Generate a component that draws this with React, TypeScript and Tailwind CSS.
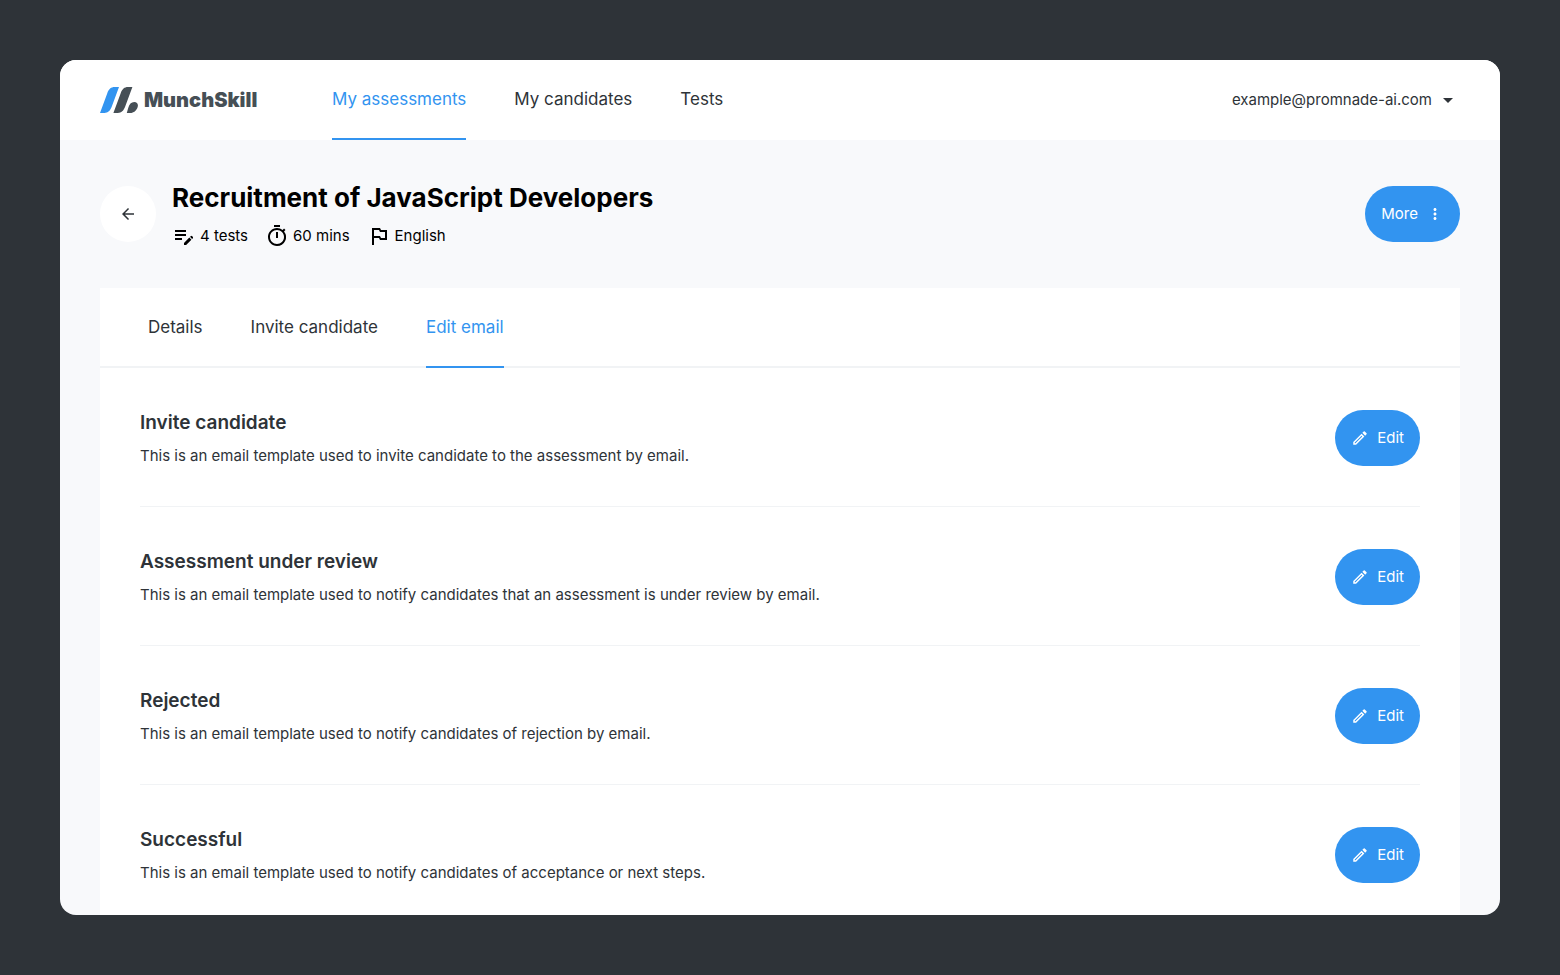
import React from "react";
import {
  MdArrowBack,
  MdArrowDropDown,
  MdMoreVert,
  MdOutlineEditNote,
  MdOutlineModeEdit,
  MdOutlineTimer,
  MdOutlinedFlag,
} from "react-icons/md";

const mainNav = ["My assessments", "My candidates", "Tests"];
const tabs = ["Details", "Invite candidate", "Edit email"];

const facts = [
  { Icon: MdOutlineEditNote, label: "4 tests" },
  { Icon: MdOutlineTimer, label: "60 mins" },
  { Icon: MdOutlinedFlag, label: "English" },
];

const templates = [
  {
    title: "Invite candidate",
    text: "This is an email template used to invite candidate to the assessment by email.",
  },
  {
    title: "Assessment under review",
    text: "This is an email template used to notify candidates that an assessment is under review by email.",
  },
  {
    title: "Rejected",
    text: "This is an email template used to notify candidates of rejection by email.",
  },
  {
    title: "Successful",
    text: "This is an email template used to notify candidates of acceptance or next steps.",
  },
];

function Logo() {
  return (
    <a href="#home" className="flex w-[184px] items-center gap-1.5 text-[#464f56]">
      <svg width="38" height="26" viewBox="0 0 38 26" aria-hidden="true">
        <path
          d="M0 26 L7.2 6.4 C8.8 2 11 0 14.6 0 H19 L11.8 19.6 C10.2 24 8 26 4.4 26 Z"
          fill="#3294f0"
        />
        <path
          d="M13.4 26 L20.6 6.4 C22.2 2 24.4 0 28 0 H32.4 L25.2 19.6 C23.6 24 21.4 26 17.8 26 Z"
          fill="#464f56"
        />
        <path
          d="M26.8 26 L28.2 21 C29.2 17.2 31.2 15 34.2 15 C37.2 15 38.6 17.4 37.6 20.2 C36.4 23.6 33.8 26 30.2 26 Z"
          fill="#464f56"
        />
      </svg>
      <span className="text-xl font-black">MunchSkill</span>
    </a>
  );
}

function Header() {
  return (
    <header className="flex h-20 shrink-0 items-stretch bg-white px-10">
      <Logo />
      <nav className="ml-12 flex gap-12 text-[17px]">
        {mainNav.map((item, i) => (
          <a
            key={item}
            href={"#" + i}
            className={
              i === 0
                ? "flex items-center border-b-2 border-[#3294f0] text-[#3294f0]"
                : "flex items-center border-b-2 border-transparent"
            }
          >
            {item}
          </a>
        ))}
      </nav>
      <button type="button" className="ml-auto flex items-center gap-1">
        example@promnade-ai.com
        <MdArrowDropDown size={24} />
      </button>
    </header>
  );
}

function TitleBar() {
  return (
    <div className="flex items-center gap-4">
      <button
        type="button"
        aria-label="Back"
        className="flex size-14 shrink-0 items-center justify-center rounded-full bg-white"
      >
        <MdArrowBack size={18} />
      </button>
      <div className="flex flex-col gap-2 text-black">
        <h1 className="text-[26px] leading-9 font-bold">Recruitment of JavaScript Developers</h1>
        <ul className="flex gap-[17px]">
          {facts.map(({ Icon, label }) => (
            <li key={label} className="flex items-center gap-1">
              <Icon size={24} />
              {label}
            </li>
          ))}
        </ul>
      </div>
      <button
        type="button"
        className="ml-auto flex h-14 items-center gap-2 rounded-full bg-[#3294f0] px-4 text-white"
      >
        More
        <MdMoreVert size={18} />
      </button>
    </div>
  );
}

function Panel() {
  return (
    <section className="mt-10 bg-white">
      <nav className="flex h-20 gap-12 px-12 text-[17px] shadow-[inset_0_-2px_0_#f1f3f5]">
        {tabs.map((tab, i) => (
          <a
            key={tab}
            href={"#tab-" + i}
            className={
              i === 2
                ? "flex items-center border-b-2 border-[#3294f0] text-[#3294f0]"
                : "flex items-center border-b-2 border-transparent"
            }
          >
            {tab}
          </a>
        ))}
      </nav>
      <ul className="px-10">
        {templates.map(({ title, text }) => (
          <li
            key={title}
            className="flex h-[139px] items-center justify-between border-b border-[#f1f3f5] pt-0.5"
          >
            <div className="flex flex-col gap-1.5">
              <h2 className="text-[19px] leading-[30px] font-semibold">{title}</h2>
              <p>{text}</p>
            </div>
            <button
              type="button"
              aria-label={"Edit " + title}
              className="flex h-14 items-center gap-2 rounded-full bg-[#3294f0] px-4 text-white"
            >
              <MdOutlineModeEdit size={18} />
              Edit
            </button>
          </li>
        ))}
      </ul>
    </section>
  );
}

export default function App() {
  return (
    <div className="flex h-screen bg-[#2e3338] p-[60px] font-['Inter',sans-serif] text-[15px] leading-6 text-[#2e3338]">
      <div className="flex flex-1 flex-col overflow-hidden rounded-2xl bg-[#f8f9fb]">
        <Header />
        <main className="px-10 pt-10">
          <TitleBar />
          <Panel />
        </main>
      </div>
    </div>
  );
}
